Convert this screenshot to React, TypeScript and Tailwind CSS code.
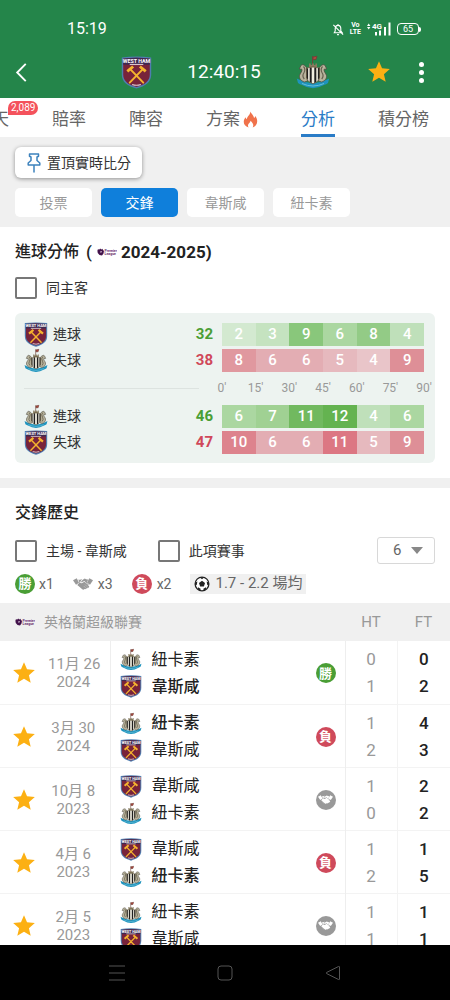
import React from "react";
import { MdStar } from "react-icons/md";

type Team = "westham" | "newcastle";
type Result = "win" | "draw" | "loss";

interface IconProps {
  className?: string;
}

const teamNames: Record<Team, string> = {
  westham: "韋斯咸",
  newcastle: "紐卡素",
};

const WestHamCrest = ({ className }: IconProps) => (
  <svg viewBox="0 0 32 34" className={className} aria-hidden="true">
    <path d="M.8 1.5Q16-.4 31.200 1.500V19c0 8-6 12-15.200 14.500C6.800 31 .8 27 .8 19Z" fill="#4f7db0" />
    <path d="M2.300 2.800Q16 1 29.700 2.800V19c0 7-5.500 10.700-13.700 12.900C7.800 29.700 2.300 26 2.300 19Z" fill="#78233a" />
    <path d="M2.300 2.800Q16 1 29.700 2.800V9H2.300Z" fill="#3f2a52" />
    <text x="16" y="7" textAnchor="middle" fontSize="5.500" fontWeight="700" fill="#fff" fontFamily="Roboto, sans-serif">
      WEST HAM
    </text>
    <path d="M9 8.700h14" stroke="#d8c5cd" strokeWidth="1.200" />
    <g stroke="#f5b42e" fill="none">
      <path d="M9.500 13.500 23 27.500M22.500 13.500 9 27.500" strokeWidth="2" strokeLinecap="round" />
      <path d="M6.500 15.800 12.500 10.800M25.500 15.800 19.500 10.800" strokeWidth="3" />
    </g>
    <path d="M11.500 29.300q4.500 1.800 9 0" stroke="#dccdd3" strokeWidth="1.200" fill="none" />
  </svg>
);

const NewcastleCrest = ({ className }: IconProps) => (
  <svg viewBox="0 0 34 34" className={className} aria-hidden="true">
    {/* ribbon */}
    <path d="M.8 23.500 4 25q13 6.500 26 0l3.200-1.500-1.200 4.500q-2 1.500-3.500 1.800Q17 36.500 5.500 29.800 4 29.500 2 28Z" fill="#1f93bd" />
    <path d="M6 28.500q11 5 22 0" stroke="#66bfd8" strokeWidth="1" fill="none" />
    {/* lion and keep */}
    <path d="M16.500 1v10M17 2l4-.8-1 3.300-3 .2Z" fill="#b5473b" stroke="#70423a" strokeWidth=".9" />
    <path d="M13 13V8.500h1.800V10h1.400V8.500h1.800V10h1.400V8.500H21V13Z" fill="#857a5e" />
    {/* sea horses */}
    <path d="M11 13.500C9.500 10 6 8.500 4.800 10.800L3.300 14l2.500.2c.8 2.300-1.800 4-2.300 6.300-.5 2.800 1.500 5.500 5 6.500l3-1Z" fill="#b8b39c" stroke="#4f4c42" strokeWidth=".8" />
    <path d="M23 13.500c1.500-3.500 5-5 6.200-2.700l1.500 3.200-2.500.2c-.8 2.300 1.800 4 2.300 6.300.5 2.800-1.500 5.500-5 6.500l-3-1Z" fill="#b8b39c" stroke="#4f4c42" strokeWidth=".8" />
    <path d="M7.500 11.500q2.500 3 .3 6.500-2 3 .5 6M26.500 11.500q-2.500 3-.3 6.500 2 3-.5 6" stroke="#67614f" strokeWidth="1.200" fill="none" />
    {/* striped shield */}
    <path d="M10.500 13q6.500-2 13 0v9q0 4.500-6.500 6.800-6.500-2.300-6.500-6.800Z" fill="#f0eddf" />
    <path d="M10.500 13.300h1.600v12l-1.600-2.500ZM13.700 12.500h2v15.800l-2-1.200ZM18.300 12.500h2v14.600l-2 1.200ZM21.900 13h1.600v9.800l-1.600 2.500Z" fill="#202020" />
    <path d="M10.500 13q6.500-2 13 0v9q0 4.500-6.500 6.800-6.500-2.300-6.500-6.800Z" fill="none" stroke="#54472b" strokeWidth=".7" />
  </svg>
);

const Crest = ({ team, className }: IconProps & { team: Team }) =>
  team === "westham" ? <WestHamCrest className={className} /> : <NewcastleCrest className={className} />;

const LeagueLogo = ({ className }: IconProps) => (
  <svg viewBox="0 0 40 16" className={className} aria-hidden="true">
    <path d="m2 2 2 1.500L6.500.8 8.500 3l3-1.500V4l2.500 1.500L13 11l-3 4-5-.8L1.500 10 .8 5.500Z" fill="#43124b" />
    <path d="m7 6 3 .5-1 2.500-2.500.5Z" fill="#d7c3da" />
    <text x="15" y="7.500" fontSize="7" fontWeight="700" fill="#6a3472" fontFamily="Roboto, sans-serif">Premier</text>
    <text x="15" y="14" fontSize="7" fontWeight="700" fill="#6a3472" fontFamily="Roboto, sans-serif">League</text>
  </svg>
);

const FlameIcon = ({ className }: IconProps) => (
  <svg viewBox="0 0 16 18" className={className} aria-hidden="true">
    <path
      d="M7.800.5c.8 2.500 3.700 4 4 7 .8-.4 1.200-1.200 1.300-2.200 1.500 1.900 2.200 3.800 2 6-.3 3.200-2 5.200-4.800 6.200 1.300-2.300.8-4.600-2.300-7.300.1 1.900-2.500 2.800-2.700 4.800-.1 1 .2 1.800.7 2.600C2.700 16.500.8 14.500.8 11.500c0-2 1-3.500 2-4.900.2 1 .6 1.700 1.300 2C4.400 5.500 8 4 7.800.5Z"
      fill="#f0724b"
    />
  </svg>
);

const PinIcon = ({ className }: IconProps) => (
  <svg viewBox="0 0 14 20" className={className} fill="none" stroke="#3d82bd" strokeWidth="1.500" strokeLinejoin="round" strokeLinecap="round" aria-hidden="true">
    <path d="M2.500 1h9v2.300L10 4v3.500l2.800 2.500v2H1.200v-2L4 7.500V4l-1.500-.7ZM7 12v7" />
  </svg>
);

const HandshakeIcon = ({ className }: IconProps) => (
  <svg viewBox="0 0 40 24" className={className} fill="currentColor" aria-hidden="true">
    <path d="M0 4.500 7.500.5l4.500 9-6 4Z" />
    <path d="M40 4.500 32.500.5l-4.500 9 6 4Z" />
    <path d="M10.500 3q4 1.200 8-.8L14 8.500q2 3.500 6 .5l3-1.500 9.500 9.500q-.5 3-3 2.200-.8 2.500-3.300 1.800-1.200 2.200-3.500 1.200-1.700 2-4.200.3L8.500 14l4.500-5Z" />
    <path d="M19.500 3.500 23.500 1q3.500 2.500 7 2l-3 6.500 4 4-1.300 1.500L23 6l-4.500 2.200q-1.500.8-2.700-.2Z" />
    <path d="m21.500 16 4 4M24 13l4.500 4.500M10.500 17l3 2.500M13.500 20l2.500 2" stroke="#fff" strokeOpacity=".55" strokeWidth="1" />
  </svg>
);

const FootballIcon = ({ className }: IconProps) => (
  <svg viewBox="0 0 20 20" className={className} aria-hidden="true">
    <circle cx="10" cy="10" r="8.600" fill="#fff" stroke="#222" strokeWidth="1.600" />
    <path d="m10 6 3.800 2.800-1.500 4.400H7.700L6.200 8.800Z" fill="#222" />
    <path d="M7 1.500h6L10 4ZM1.200 8l3-1.200L3.500 11l-2 1.500ZM18.800 8l-3-1.200.7 4.200 2 1.500ZM4.500 16.500l.5-2.500 3.300 1.800-.3 2.700ZM15.500 16.500 15 14l-3.300 1.800.3 2.700Z" fill="#222" />
  </svg>
);

const StatusBar = () => (
  <div className="flex items-center justify-between pt-[17px] pr-[29px] pl-[67px]">
    <span className="text-base leading-6">15:19</span>
    <div className="flex items-center gap-[6px]">
      <svg viewBox="0 0 12 14" className="h-[13px] w-[12px]" fill="none" stroke="currentColor" strokeWidth="1.200" aria-hidden="true">
        <path d="M2 10.500h8.500L9 8.500V6Q9 2.500 6 2.500T3 6v2.500ZM6 1v1.500M5 12.500h2M1 2l10.500 10.500" />
      </svg>
      <span className="flex flex-col items-center text-[7px] leading-[7px] font-bold">
        <span>Vo</span>
        <span>LTE</span>
      </span>
      <svg viewBox="0 0 24 14" className="h-[14px] w-[24px]" fill="currentColor" aria-hidden="true">
        <path d="m0 4 1.700-2.500L3.400 4ZM0 5h3.400L1.700 7.500Z" />
        <text x="5" y="6.500" fontSize="8" fontWeight="700" fontFamily="Roboto, sans-serif">4G</text>
        <path d="M8 10h2v3.500H8ZM12 8.500h2v5h-2ZM17 5h2v8.500h-2ZM21.500.5h2v13h-2Z" />
      </svg>
      <span className="flex items-center">
        <span className="flex h-[12px] w-[22px] items-center justify-center rounded-[4px] border border-white text-[9px] leading-none">65</span>
        <span className="h-[5px] w-[2px] rounded-r bg-white" />
      </span>
    </div>
  </div>
);

const Header = () => (
  <header className="h-[98px] shrink-0 bg-[#24854a] text-white">
    <StatusBar />
    <div className="flex h-[62px] items-center justify-between pr-5 pl-[15px]">
      <button type="button" aria-label="返回" className="w-[70px]">
        <svg viewBox="0 0 12 20" className="h-[19px] w-[12px]" fill="none" stroke="currentColor" strokeWidth="2" aria-hidden="true">
          <path d="m11 1-9 9 9 9" />
        </svg>
      </button>
      <WestHamCrest className="h-[33px] w-[31px]" />
      <h1 className="text-[19px]">12:40:15</h1>
      <NewcastleCrest className="h-[34px] w-[34px]" />
      <div className="flex items-center gap-[22px]">
        <button type="button" aria-label="收藏">
          <MdStar className="h-[26px] w-[26px] text-[#fcb013]" />
        </button>
        <button type="button" aria-label="更多" className="flex w-4 flex-col items-center gap-[3px]">
          <span className="h-[5px] w-[5px] rounded-full bg-white" />
          <span className="h-[5px] w-[5px] rounded-full bg-white" />
          <span className="h-[5px] w-[5px] rounded-full bg-white" />
        </button>
      </div>
    </div>
  </header>
);

const tabs = ["聊天", "賠率", "陣容", "方案", "分析", "積分榜"];

const TabBar = () => (
  <nav className="flex h-[39px] shrink-0 justify-end gap-[43px] overflow-hidden bg-white pr-[21px]">
    {tabs.map((tab) => (
      <button
        key={tab}
        type="button"
        className={
          tab === "分析"
            ? "relative flex shrink-0 items-center border-b-[3px] border-[#2a7cc7] pt-[8px] text-[17px] text-[#2a7cc7]"
            : "relative flex shrink-0 items-center border-b-[3px] border-transparent pt-[8px] text-[17px] text-[#666666]"
        }
      >
        {tab}
        {tab === "方案" && <FlameIcon className="mb-[2px] ml-[3px] h-[17px] w-[15px]" />}
        {tab === "聊天" && (
          <span className="absolute top-[3px] left-full -ml-[1px] rounded-full rounded-bl-none bg-[#f4525c] px-[3px] text-[10px] leading-[14px] text-white">
            2,089
          </span>
        )}
      </button>
    ))}
  </nav>
);

const subTabs = ["投票", "交鋒", "韋斯咸", "紐卡素"];

const SubTabs = () => (
  <div className="shrink-0 bg-[#f0f0f0] px-[15px] py-[10px]">
    <button type="button" className="flex h-[31px] items-center gap-[6px] rounded-md bg-white pr-[11px] pl-[12px] text-sm text-[#333333] shadow-[0_1px_4px_rgba(0,0,0,0.4)]">
      <PinIcon className="h-[20px] w-[14px]" />
      置頂實時比分
    </button>
    <div className="mt-[10px] flex gap-[9px]">
      {subTabs.map((tab) => (
        <button
          key={tab}
          type="button"
          className={
            tab === "交鋒"
              ? "h-[29px] w-[77px] rounded-[5px] bg-[#0f7fdb] text-sm text-white"
              : "h-[29px] w-[77px] rounded-[5px] bg-white text-sm text-[#999999]"
          }
        >
          {tab}
        </button>
      ))}
    </div>
  </div>
);

const Checkbox = ({ label }: { label: string }) => (
  <label className="flex items-center gap-[9px] text-sm text-[#333333]">
    <input type="checkbox" className="h-[22px] w-[22px] appearance-none rounded-[2px] border-2 border-[#777777] checked:bg-[#0f7fdb]" />
    {label}
  </label>
);

const scoredShades: Record<number, string> = {
  2: "bg-[#d3e9d0]",
  3: "bg-[#c5e3c0]",
  4: "bg-[#bfe0ba]",
  6: "bg-[#abd7a1]",
  7: "bg-[#a0d193]",
  8: "bg-[#93cb86]",
  9: "bg-[#89c77b]",
  11: "bg-[#71b95f]",
  12: "bg-[#64b350]",
};

const concededShades: Record<number, string> = {
  4: "bg-[#e9c5c9]",
  5: "bg-[#e6b9be]",
  6: "bg-[#e3adb3]",
  8: "bg-[#e0989f]",
  9: "bg-[#de8f97]",
  10: "bg-[#dd838d]",
  11: "bg-[#dc7783]",
};

interface GoalRowProps {
  team: Team;
  kind: "scored" | "conceded";
  total: number;
  goals: number[];
}

const GoalRow = ({ team, kind, total, goals }: GoalRowProps) => {
  const shades = kind === "scored" ? scoredShades : concededShades;
  return (
    <div className="flex h-[26px] items-center text-[#333333]">
      <Crest team={team} className="h-[25px] w-[24px]" />
      <span className="ml-[5px] flex-1 text-sm">{kind === "scored" ? "進球" : "失球"}</span>
      <span className={kind === "scored" ? "mr-[9px] text-[15px] font-bold text-[#4a9e35]" : "mr-[9px] text-[15px] font-bold text-[#d0485a]"}>
        {total}
      </span>
      <div className="grid h-[22px] w-[202px] grid-cols-6">
        {goals.map((n, i) => (
          <span key={i} className={`${shades[n]} flex items-center justify-center text-[15px] font-medium text-white`}>
            {n}
          </span>
        ))}
      </div>
    </div>
  );
};

const minutes = ["0'", "15'", "30'", "45'", "60'", "75'", "90'"];

const GoalDistribution = () => (
  <section className="shrink-0 bg-white px-[15px] pb-[15px]">
    <h2 className="flex items-center pt-[10px] text-base leading-[30px] font-medium text-[#222222]">
      進球分佈
      <span className="ml-[7px] text-[17px]">(</span>
      <LeagueLogo className="mr-[4px] ml-[5px] h-[8px] w-[20px]" />
      <span className="text-[17px] font-bold">2024-2025)</span>
    </h2>
    <div className="mt-[10px] flex">
      <Checkbox label="同主客" />
    </div>
    <div className="mt-[14px] rounded-md bg-[#edf3f0] py-[8px] pr-[11px] pl-[9px]">
      <GoalRow team="westham" kind="scored" total={32} goals={[2, 3, 9, 6, 8, 4]} />
      <GoalRow team="newcastle" kind="conceded" total={38} goals={[8, 6, 6, 5, 4, 9]} />
      <div className="flex h-[30px] items-center">
        <div className="mr-[23px] h-px flex-1 bg-[#dde3e0]" />
        <div className="w-[202px]">
          <div className="-mx-[17px] grid grid-cols-7 text-center text-xs text-[#999999]">
            {minutes.map((m) => (
              <span key={m}>{m}</span>
            ))}
          </div>
        </div>
      </div>
      <GoalRow team="newcastle" kind="scored" total={46} goals={[6, 7, 11, 12, 4, 6]} />
      <GoalRow team="westham" kind="conceded" total={47} goals={[10, 6, 6, 11, 5, 9]} />
    </div>
  </section>
);

const ResultBadge = ({ result }: { result: Result }) => {
  if (result === "draw") {
    return (
      <span className="flex h-[20px] w-[20px] items-center justify-center rounded-full bg-[#999999]">
        <HandshakeIcon className="h-[9px] w-[15px] text-white" />
      </span>
    );
  }
  return result === "win" ? (
    <span className="flex h-[20px] w-[20px] items-center justify-center rounded-full bg-[#4a9e35] text-[13px] leading-none font-bold text-white">勝</span>
  ) : (
    <span className="flex h-[20px] w-[20px] items-center justify-center rounded-full bg-[#cf4a5b] text-[13px] leading-none font-bold text-white">負</span>
  );
};

interface Side {
  team: Team;
  ht: number;
  ft: number;
  winner?: boolean;
}

interface Match {
  day: string;
  year: string;
  result: Result;
  sides: Side[];
}

const matches: Match[] = [
  { day: "11月 26", year: "2024", result: "win", sides: [{ team: "newcastle", ht: 0, ft: 0 }, { team: "westham", ht: 1, ft: 2, winner: true }] },
  { day: "3月 30", year: "2024", result: "loss", sides: [{ team: "newcastle", ht: 1, ft: 4, winner: true }, { team: "westham", ht: 2, ft: 3 }] },
  { day: "10月 8", year: "2023", result: "draw", sides: [{ team: "westham", ht: 1, ft: 2 }, { team: "newcastle", ht: 0, ft: 2 }] },
  { day: "4月 6", year: "2023", result: "loss", sides: [{ team: "westham", ht: 1, ft: 1 }, { team: "newcastle", ht: 2, ft: 5, winner: true }] },
  { day: "2月 5", year: "2023", result: "draw", sides: [{ team: "newcastle", ht: 1, ft: 1 }, { team: "westham", ht: 1, ft: 1 }] },
];

const MatchRow = ({ match }: { match: Match }) => (
  <tr className="h-[63px] border-b border-[#f3f3f3]">
    <td className="pt-[2px] pl-[11px]">
      <button type="button" aria-label="收藏" className="block">
        <MdStar className="h-[26px] w-[26px] text-[#fcb013]" />
      </button>
    </td>
    <td className="pt-[2px] pr-[11px] text-center text-[15px] leading-[18px] whitespace-nowrap text-[#999999]">
      {match.day}
      <br />
      {match.year}
    </td>
    <td className="border-x border-[#eeeeee] pt-[2px] pr-[9px] pl-[9px]">
      <div className="flex items-center justify-between">
        <div>
          {match.sides.map((side) => (
            <div key={side.team} className="flex h-[27px] items-center gap-[10px] text-base text-[#222222]">
              <Crest team={side.team} className="h-[23px] w-[22px]" />
              <span className={side.winner ? "font-medium" : "font-normal"}>{teamNames[side.team]}</span>
            </div>
          ))}
        </div>
        <ResultBadge result={match.result} />
      </div>
    </td>
    <td className="border-r border-[#f3f3f3] pt-[2px] text-center text-[17px] leading-[27px] text-[#999999]">
      {match.sides.map((side) => (
        <div key={side.team}>{side.ht}</div>
      ))}
    </td>
    <td className="pt-[2px] text-center text-[17px] leading-[27px] font-medium text-[#222222]">
      {match.sides.map((side) => (
        <div key={side.team}>{side.ft}</div>
      ))}
    </td>
  </tr>
);

const MatchHistory = () => (
  <section className="border-t-[10px] border-[#f0f0f0] bg-white">
    <div className="px-[15px]">
      <h2 className="pt-[10px] text-base leading-[30px] font-medium text-[#222222]">交鋒歷史</h2>
      <div className="mt-[9px] flex items-center justify-between">
        <div className="flex gap-[31px]">
          <Checkbox label="主場 - 韋斯咸" />
          <Checkbox label="此項賽事" />
        </div>
        <div className="relative text-[#666666]">
          <select aria-label="場數" defaultValue="6" className="block h-[27px] w-[58px] appearance-none rounded-[3px] border border-[#d8d8d8] bg-white pl-[15px] text-[15px]">
            <option>6</option>
            <option>10</option>
            <option>20</option>
          </select>
          <svg viewBox="0 0 12 7" className="pointer-events-none absolute top-[10px] right-[12px] h-[7px] w-[12px]" aria-hidden="true">
            <path d="M0 0h12L6 7Z" fill="#888888" />
          </svg>
        </div>
      </div>
      <div className="flex h-[39px] items-center text-sm text-[#666666]">
        <ResultBadge result="win" />
        <span className="ml-[4px]">x1</span>
        <HandshakeIcon className="ml-[19px] h-[12px] w-[20px] text-[#999999]" />
        <span className="ml-[5px]">x3</span>
        <span className="ml-[19px]">
          <ResultBadge result="loss" />
        </span>
        <span className="ml-[5px]">x2</span>
        <span className="ml-[19px] flex h-[20px] items-center gap-[5px] bg-[#f0f0f0] px-[4px] text-[15px]">
          <FootballIcon className="h-[16px] w-[16px]" />
          1.7 - 2.2 場均
        </span>
      </div>
    </div>
    <table className="w-full table-fixed border-collapse">
      <colgroup>
        <col className="w-[48px]" />
        <col className="w-[62px]" />
        <col />
        <col className="w-[52px]" />
        <col className="w-[53px]" />
      </colgroup>
      <thead>
        <tr className="h-[38px] bg-[#f0f0f0] text-[#999999]">
          <th colSpan={3} className="pl-[15px] text-left font-normal">
            <span className="flex items-center gap-[9px] text-sm">
              <LeagueLogo className="h-[8px] w-[20px]" />
              英格蘭超級聯賽
            </span>
          </th>
          <th className="text-[15px] font-normal">HT</th>
          <th className="text-[15px] font-normal">FT</th>
        </tr>
      </thead>
      <tbody>
        {matches.map((match) => (
          <MatchRow key={match.day} match={match} />
        ))}
      </tbody>
    </table>
  </section>
);

const SystemNav = () => (
  <footer className="flex h-[55px] shrink-0 items-center justify-center gap-[92px] bg-black text-[#555555]">
    <button type="button" aria-label="最近">
      <svg viewBox="0 0 16 16" className="h-4 w-4" fill="none" stroke="currentColor" aria-hidden="true">
        <path d="M0 1h16M0 8h16M0 15h16" />
      </svg>
    </button>
    <button type="button" aria-label="主頁">
      <svg viewBox="0 0 16 16" className="h-4 w-4" fill="none" stroke="currentColor" aria-hidden="true">
        <rect x="1" y="1" width="14" height="14" rx="3" />
      </svg>
    </button>
    <button type="button" aria-label="上一頁">
      <svg viewBox="0 0 16 16" className="h-4 w-4" fill="none" stroke="currentColor" strokeLinejoin="round" aria-hidden="true">
        <path d="M14.500 2v12q0 1-1 .5L1.500 8.500q-.7-.5 0-1l12-6q1-.5 1 .5Z" />
      </svg>
    </button>
  </footer>
);

const App = () => {
  return (
    <div className="flex h-screen flex-col overflow-hidden bg-white font-['Roboto','Noto_Sans_CJK_TC',sans-serif]">
      <Header />
      <TabBar />
      <main className="min-h-0 flex-1 overflow-hidden">
        <SubTabs />
        <GoalDistribution />
        <MatchHistory />
      </main>
      <SystemNav />
    </div>
  );
};

export default App;
